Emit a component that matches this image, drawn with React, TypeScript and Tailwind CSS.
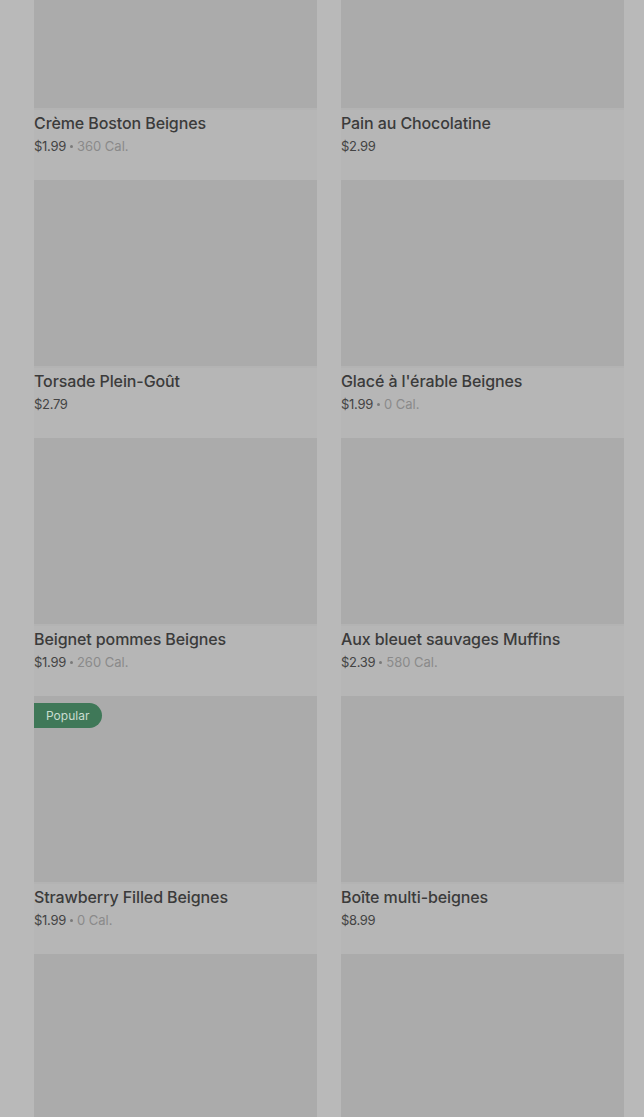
import React from "react";

type Item = { name: string; price: string; cal?: string; popular?: boolean };

const items: Item[] = [
  { name: "Crème Boston Beignes", price: "$1.99", cal: "360 Cal." },
  { name: "Pain au Chocolatine", price: "$2.99" },
  { name: "Torsade Plein-Goût", price: "$2.79" },
  { name: "Glacé à l'érable Beignes", price: "$1.99", cal: "0 Cal." },
  { name: "Beignet pommes Beignes", price: "$1.99", cal: "260 Cal." },
  { name: "Aux bleuet sauvages Muffins", price: "$2.39", cal: "580 Cal." },
  { name: "Strawberry Filled Beignes", price: "$1.99", cal: "0 Cal.", popular: true },
  { name: "Boîte multi-beignes", price: "$8.99" },
  { name: "", price: "" },
  { name: "", price: "" },
];

const Card = ({ item }: { item: Item }) => (
  <div className="flex flex-col h-[258px] bg-[#b6b6b6]">
    <div className="relative h-[188px] bg-[#ababab] border-b-2 border-[#b3b3b3]">
      {item.popular && (
        <span className="absolute left-0 top-[7px] h-[25px] pl-3 pr-[13px] flex items-center rounded-r-full bg-[#3f7858] text-[12px] text-[#c9ddd0]">
          Popular
        </span>
      )}
    </div>
    {item.name && (
      <div className="pt-[3px]">
        <div className="text-[16px] leading-[20px] font-medium text-[#3b3b3b] tracking-[-0.1px]">
          {item.name}
        </div>
        <div className="mt-[3px] flex items-center text-[13px] leading-[20px] text-[#444444]">
          <span className="tracking-[-0.3px]">{item.price}</span>
          {item.cal && (
            <>
              <span className="mx-[4px] w-[3px] h-[3px] rounded-full bg-[#7a7a7a]" />
              <span className="text-[#8a8a8a]">{item.cal}</span>
            </>
          )}
        </div>
      </div>
    )}
  </div>
);

export default function App() {
  return (
    <div
      className="h-[1117px] overflow-hidden bg-[#b9b9b9]"
      style={{ fontFamily: "Inter, Roboto, 'Noto Sans', sans-serif" }}
    >
      <div className="-mt-[78px] pl-[34px] pr-[20px] grid grid-cols-2 gap-x-[24px]">
        {items.map((it, i) => (
          <Card key={i} item={it} />
        ))}
      </div>
    </div>
  );
}
